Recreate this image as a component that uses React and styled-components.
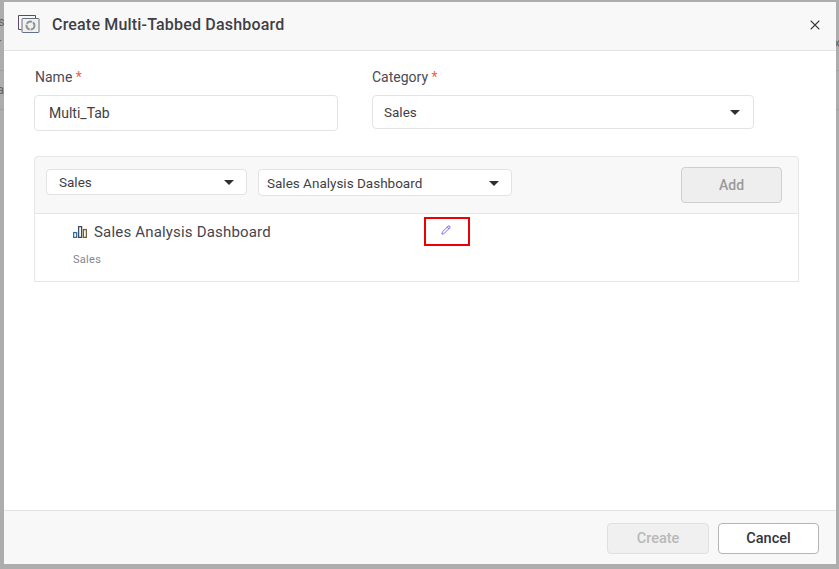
import React from 'react';
import styled, { createGlobalStyle } from 'styled-components';
import { X, Pencil } from 'lucide-react';

const Global = createGlobalStyle`
  html, body { margin: 0; padding: 0; height: 100%; background: #adadad; }
  body { font-family: Roboto, "Liberation Sans", sans-serif; overflow: hidden; }
`;

const Backdrop = styled.div`
  width: 839px;
  height: 569px;
  display: grid;
  grid-template-columns: 4px 832px 3px;
  padding: 2px 0 5px;
  box-sizing: border-box;
  background: #adadad;
`;

const Strip = styled.div`
  display: flex;
  flex-direction: column;
  overflow: hidden;
  color: #666;
  font-size: 13px;
`;

const StripRow = styled.div`
  height: ${props => props.height}px;
  line-height: 16px;
  padding-top: ${props => props.top || 0}px;
  flex-shrink: 0;
  white-space: nowrap;
  box-sizing: border-box;
  margin-left: ${props => props.offset}px;
  border-bottom: ${props => props.line ? '1px solid #a2a2a2' : '0'};
`;

const Dialog = styled.div`
  display: flex;
  flex-direction: column;
  background: #fff;
  min-height: 0;
`;

const Header = styled.div`
  height: 49px;
  box-sizing: border-box;
  display: flex;
  align-items: center;
  padding: 0 13px 3px 14px;
  background: #f8f8f8;
  border-bottom: 1px solid #e3e3e3;
  flex-shrink: 0;
`;

const Title = styled.div`
  margin-left: 12px;
  font-size: 16px;
  font-weight: 500;
  letter-spacing: 0.18px;
  color: #3f3f46;
  flex: 1;
`;

const CloseButton = styled.div`
  display: flex;
  color: #3c3c3c;
`;

const Body = styled.div`
  flex: 1;
  padding: 18px 37px 0 30px;
`;

const FieldRow = styled.div`
  display: flex;
  gap: 34px;
`;

const Field = styled.div`
  width: ${props => props.width}px;
`;

const Label = styled.div`
  font-size: 14px;
  line-height: 17px;
  color: #4b4b55;
  margin-bottom: 9px;
  padding-left: ${props => props.indent || 0}px;
`;

const Star = styled.span`
  color: #f4604c;
`;

const Input = styled.div`
  height: ${props => props.height}px;
  box-sizing: border-box;
  display: flex;
  align-items: center;
  padding: 0 14px;
  border: 1px solid #e3e3e3;
  border-radius: 4px;
  background: #fff;
  font-size: 14px;
  color: #3f3f46;
`;

const Select = styled.div`
  width: ${props => props.width}px;
  height: ${props => props.height}px;
  box-sizing: border-box;
  display: flex;
  align-items: center;
  justify-content: space-between;
  padding: ${props => props.drop || 0}px ${props => props.right}px 0 ${props => props.left}px;
  border: 1px solid #e3e3e3;
  border-radius: 4px;
  background: #fff;
  font-size: 13.5px;
  color: #3f3f46;
`;

const Caret = styled.span`
  width: 0;
  height: 0;
  border-left: 5.5px solid transparent;
  border-right: 5.5px solid transparent;
  border-top: 5px solid #2f2f2f;
`;

const Toolbar = styled.div`
  margin-top: 25px;
  height: 58px;
  box-sizing: border-box;
  display: flex;
  align-items: center;
  padding: 0 16px 0 11px;
  background: #f8f8f8;
  border: 1px solid #e6e6e6;
  border-radius: 4px 4px 0 0;
`;

const SelectGroup = styled.div`
  display: flex;
  align-items: flex-start;
  gap: 11px;
  height: 27px;
  margin-bottom: 5px;
`;

const AddButton = styled.div`
  margin-left: auto;
  width: 101px;
  height: 36px;
  box-sizing: border-box;
  display: flex;
  align-items: center;
  justify-content: center;
  background: #eeeeee;
  border: 1px solid #cfcfcf;
  border-radius: 4px;
  font-size: 14px;
  font-weight: 500;
  color: #9a9a9a;
`;

const ListPanel = styled.div`
  height: 68px;
  box-sizing: border-box;
  border: 1px solid #e6e6e6;
  border-top: 0;
  padding: 7px 0 0 38px;
`;

const ItemRow = styled.div`
  display: flex;
  align-items: center;
  height: 22px;
`;

const ItemTitle = styled.div`
  margin-left: 7px;
  width: 330px;
  font-size: 15px;
  letter-spacing: 0.18px;
  color: #45454f;
  white-space: nowrap;
`;

const EditMarker = styled.div`
  width: 46px;
  height: 29px;
  box-sizing: border-box;
  display: flex;
  align-items: center;
  justify-content: center;
  border: 2px solid #ee0000;
  color: #4f41ee;
  margin-top: -1px;
  padding: 0 3px 3px 0;
`;

const ItemCategory = styled.div`
  margin-top: 10px;
  font-size: 11px;
  letter-spacing: 0.3px;
  color: #85858c;
`;

const Footer = styled.div`
  height: 53px;
  box-sizing: content-box;
  display: flex;
  align-items: center;
  justify-content: flex-end;
  gap: 9px;
  padding: 0 17px 0 0;
  background: #f8f8f8;
  border-top: 1px solid #e3e3e3;
  flex-shrink: 0;
`;

const FooterButton = styled.div`
  width: ${props => props.width}px;
  height: 31px;
  margin-top: 1px;
  box-sizing: border-box;
  display: flex;
  align-items: center;
  justify-content: center;
  border-radius: 4px;
  font-size: 14.5px;
  font-weight: 500;
  background: ${props => props.disabled ? '#f0f0f0' : '#fff'};
  border: 1px solid ${props => props.disabled ? '#e0e0e0' : '#b5b5b5'};
  color: ${props => props.disabled ? '#b9b9b9' : '#33333b'};
`;

const DashboardIcon = () => (
  <svg width="22" height="19" viewBox="0 0 22 19" fill="none">
    <path d="M3.5 14.5H0.5V0.5h17v3" stroke="#5b4a66" strokeWidth="1" />
    <rect x="4" y="3.5" width="17" height="14" rx="0.5" fill="#f4f1ea" stroke="#66708a" strokeWidth="1" />
    <circle cx="12.5" cy="10.5" r="4" stroke="#8a93a3" strokeWidth="2" strokeDasharray="6 1" />
  </svg>
);

const BarsIcon = () => (
  <svg width="14" height="12" viewBox="0 0 14 12" fill="none" stroke="#3f4a5c" strokeWidth="1.3">
    <rect x="0.6" y="6.6" width="3" height="4.8" stroke="#2f6fa8" />
    <rect x="5.6" y="0.6" width="3" height="10.8" />
    <rect x="10.4" y="3.6" width="3" height="7.8" stroke="#7a5a30" />
  </svg>
);

export default function App() {
  return (
    <Backdrop>
      <Global />
      <Strip>
        <StripRow height={33} top={12} offset={-2}>s</StripRow>
        <StripRow height={36} offset={-3} line>r</StripRow>
        <StripRow height={39} top={11} offset={-3} line>a</StripRow>
      </Strip>
      <Dialog>
        <Header>
          <DashboardIcon />
          <Title>Create Multi-Tabbed Dashboard</Title>
          <CloseButton><X size={16} strokeWidth={1.6} /></CloseButton>
        </Header>
        <Body>
          <FieldRow>
            <Field width={304}>
              <Label indent={1}>Name <Star>*</Star></Label>
              <Input height={36}>Multi_Tab</Input>
            </Field>
            <Field width={382}>
              <Label>Category <Star>*</Star></Label>
              <Select width={382} height={34} left={11} right={13}>Sales<Caret /></Select>
            </Field>
          </FieldRow>
          <Toolbar>
            <SelectGroup>
              <Select width={201} height={26} left={12} right={12}>Sales<Caret /></Select>
              <Select width={254} height={27} left={8} right={12} drop={1}>Sales Analysis Dashboard<Caret /></Select>
            </SelectGroup>
            <AddButton>Add</AddButton>
          </Toolbar>
          <ListPanel>
            <ItemRow>
              <BarsIcon />
              <ItemTitle>Sales Analysis Dashboard</ItemTitle>
              <EditMarker><Pencil size={10} strokeWidth={1.8} /></EditMarker>
            </ItemRow>
            <ItemCategory>Sales</ItemCategory>
          </ListPanel>
        </Body>
        <Footer>
          <FooterButton width={102} disabled>Create</FooterButton>
          <FooterButton width={101}>Cancel</FooterButton>
        </Footer>
      </Dialog>
      <Strip>
        <StripRow height={33} offset={0} />
        <StripRow height={36} offset={-2} line>x</StripRow>
        <StripRow height={39} offset={0} line />
      </Strip>
    </Backdrop>
  );
}
